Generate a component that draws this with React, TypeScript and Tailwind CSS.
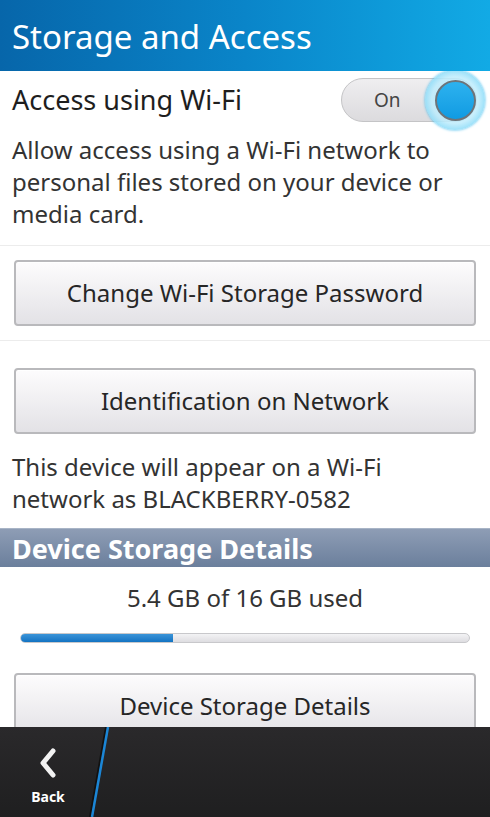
import React from "react";

const font = { fontFamily: '"Noto Sans", "Open Sans", sans-serif' };

const Divider = () => <div className="h-px bg-[#ececec]" />;

const BbButton = ({ label }: { label: string }) => (
  <button className="w-[462px] h-[66px] mx-[14px] rounded-[4px] border-2 border-[#b9b9bc] bg-gradient-to-b from-[#fdfcfd] to-[#e3e2e6] text-[24px] text-[#262626] shadow-[inset_0_1px_0_#ffffff]">
    {label}
  </button>
);

export default function App() {
  return (
    <div className="w-[490px] h-[817px] flex flex-col bg-white overflow-hidden" style={font}>
      {/* Title bar */}
      <div className="h-[71px] shrink-0 flex items-center px-[12px] bg-gradient-to-r from-[#0766aa] via-[#0a85c9] to-[#12aae5]">
        <h1 className="text-[33px] text-white leading-none mt-[2px]">Storage and Access</h1>
      </div>

      <div className="flex-1 overflow-hidden">
        {/* Toggle row */}
        <div className="flex items-center justify-between pl-[12px] pr-[13px] h-[58px]">
          <span className="text-[27px] text-[#1e1e1e]">Access using Wi-Fi</span>
          <div className="relative w-[136px] h-[44px] rounded-full border border-[#c4c4c6] bg-gradient-to-b from-[#efeef0] to-[#dcdbde] flex items-center">
            <span className="ml-[32px] text-[19px] text-[#444]">On</span>
            <div className="absolute right-[-9px] top-[-9px] w-[60px] h-[60px] rounded-full bg-[radial-gradient(circle,rgba(190,236,252,0.85)_55%,rgba(110,210,246,0.95)_85%,#22b9ee_100%)] shadow-[0_0_3px_#39b8ec] flex items-center justify-center">
              <div className="w-[41px] h-[41px] rounded-full border-2 border-[#6e7479] bg-gradient-to-b from-[#2cb2ef] to-[#0f9be2]" />
            </div>
          </div>
        </div>
        <p className="px-[12px] pt-[5px] pb-[15px] text-[24px] leading-[32px] text-[#333]">
          Allow access using a Wi-Fi network to personal files stored on your device or media card.
        </p>
        <Divider />
        <div className="py-[14px]">
          <BbButton label="Change Wi-Fi Storage Password" />
        </div>
        <Divider />
        <div className="pt-[27px]">
          <BbButton label="Identification on Network" />
        </div>
        <p className="px-[12px] pt-[17px] pb-[13px] text-[24px] leading-[32px] text-[#333]">
          This device will appear on a Wi-Fi network as BLACKBERRY-0582
        </p>

        {/* Section header */}
        <div className="h-[39px] flex items-center px-[12px] bg-gradient-to-b from-[#8e9db5] to-[#6b7f9c] border-t border-[#a8b4c6]">
          <span className="text-[27px] font-bold text-white leading-none">Device Storage Details</span>
        </div>
        <div className="text-center text-[24px] leading-[32px] text-[#333] pt-[15px]">5.4 GB of 16 GB used</div>
        <div className="mx-[20px] mt-[19px] h-[10px] rounded-full bg-gradient-to-b from-[#f3f3f5] to-[#dedde1] border border-[#c8c8cb] overflow-hidden">
          <div className="h-full w-[34%] bg-gradient-to-b from-[#3a94d8] to-[#1173c2]" />
        </div>
        <div className="pt-[30px]">
          <BbButton label="Device Storage Details" />
        </div>
      </div>

      {/* Action bar */}
      <div className="relative h-[90px] shrink-0 bg-gradient-to-b from-[#2a292b] to-[#1f1f20] flex">
        <div className="w-[96px] flex flex-col items-center pt-[21px]">
          <svg width="22" height="30" viewBox="0 0 22 30">
            <path d="M16 3 L6 15 L16 27" fill="none" stroke="#f2f2f2" strokeWidth="5" strokeLinecap="round" strokeLinejoin="round" />
          </svg>
          <span className="text-white text-[14px] font-bold mt-[8px]">Back</span>
        </div>
        <svg className="absolute left-[88px] top-0" width="22" height="90" viewBox="0 0 22 90">
          <line x1="18" y1="0" x2="2" y2="90" stroke="#111" strokeWidth="2" />
          <line x1="20" y1="0" x2="4" y2="90" stroke="#1b86d6" strokeWidth="2.5" />
        </svg>
      </div>
    </div>
  );
}
